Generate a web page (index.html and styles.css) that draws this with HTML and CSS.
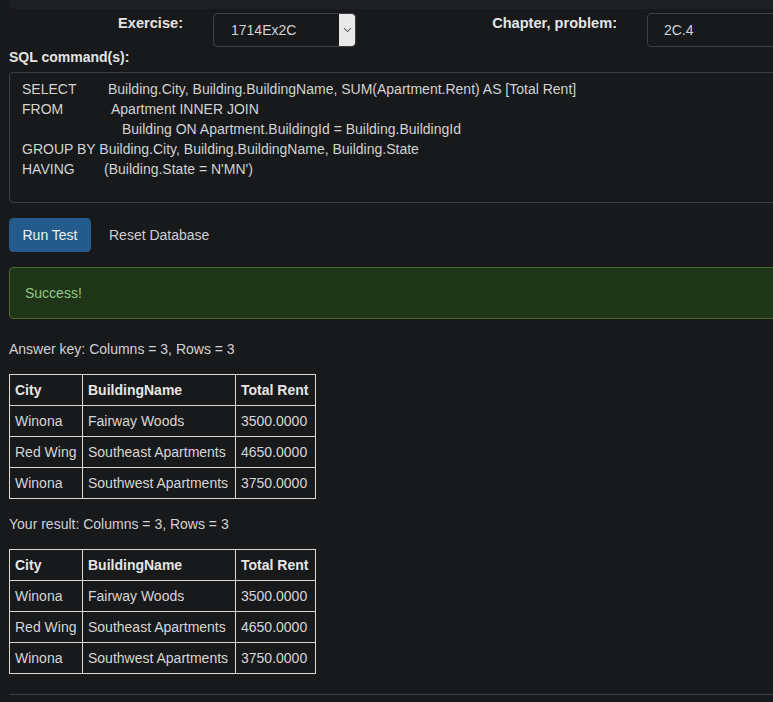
FILE: index.html
```html
<!DOCTYPE html>
<html>
<head>
<meta charset="utf-8">
<link rel="stylesheet" href="styles.css">
</head>
<body>
<div class="page">
  <div class="topbar"></div>
  <div class="form-row">
    <label class="lbl lbl-ex">Exercise:</label>
    <div class="select">
      <span class="select-text">1714Ex2C</span>
      <span class="caret-box"><svg width="9" height="6" viewBox="0 0 9 6"><path d="M1 1.2 L4.5 4.6 L8 1.2" fill="none" stroke="#666" stroke-width="1.1"/></svg></span>
    </div>
    <label class="lbl lbl-ch">Chapter, problem:</label>
    <div class="input">2C.4</div>
  </div>
  <label class="sql-label">SQL command(s):</label>
  <div class="sql-box">
    <div class="sql-line"><span class="kw kw-select">SELECT</span>Building.City, Building.BuildingName, SUM(Apartment.Rent) AS [Total Rent]</div>
    <div class="sql-line"><span class="kw kw-from">FROM</span>Apartment INNER JOIN</div>
    <div class="sql-line"><span class="kw kw-indent"></span>Building ON Apartment.BuildingId = Building.BuildingId</div>
    <div class="sql-line">GROUP BY Building.City, Building.BuildingName, Building.State</div>
    <div class="sql-line"><span class="kw kw-having">HAVING</span>(Building.State = N'MN')</div>
  </div>
  <div class="actions">
    <button class="btn btn-run">Run Test</button>
    <button class="btn btn-link">Reset Database</button>
  </div>
  <div class="alert">Success!</div>
  <p class="caption">Answer key: Columns = 3, Rows = 3</p>
  <table class="result">
    <colgroup><col class="c-city"><col class="c-name"><col class="c-rent"></colgroup>
    <tr><th>City</th><th>BuildingName</th><th>Total Rent</th></tr>
    <tr><td>Winona</td><td>Fairway Woods</td><td>3500.0000</td></tr>
    <tr><td>Red Wing</td><td>Southeast Apartments</td><td>4650.0000</td></tr>
    <tr><td>Winona</td><td>Southwest Apartments</td><td>3750.0000</td></tr>
  </table>
  <p class="caption">Your result: Columns = 3, Rows = 3</p>
  <table class="result">
    <colgroup><col class="c-city"><col class="c-name"><col class="c-rent"></colgroup>
    <tr><th>City</th><th>BuildingName</th><th>Total Rent</th></tr>
    <tr><td>Winona</td><td>Fairway Woods</td><td>3500.0000</td></tr>
    <tr><td>Red Wing</td><td>Southeast Apartments</td><td>4650.0000</td></tr>
    <tr><td>Winona</td><td>Southwest Apartments</td><td>3750.0000</td></tr>
  </table>
  <hr class="rule">
</div>
</body>
</html>
```
FILE: styles.css
```css
html, body {
  margin: 0;
  padding: 0;
  background: #18191b;
  overflow: hidden;
}
body {
  font-family: "Liberation Sans", Arial, sans-serif;
  font-size: 14px;
  line-height: 20px;
  color: #d2d2d2;
}
.page {
  width: 1100px;
  padding-left: 9px;
}
.topbar {
  height: 9px;
  background: #1f2023;
  border-bottom-left-radius: 5px;
}
.form-row {
  display: flex;
  align-items: flex-start;
  margin-top: 4px;
}
.lbl {
  font-weight: bold;
  font-size: 14.6px;
  line-height: 20px;
  color: #e4e4e4;
  text-align: right;
  margin-right: 30px;
}
.lbl-ex { width: 174px; }
.lbl-ch { width: 261px; }
.select {
  width: 143px;
  height: 34px;
  box-sizing: border-box;
  border: 1px solid #3e3f42;
  border-radius: 4px;
  display: flex;
  align-items: stretch;
  overflow: hidden;
}
.select-text {
  flex: 1;
  padding-left: 17px;
  line-height: 32px;
  color: #cfd3d8;
}
.caret-box {
  width: 16px;
  background: #e9e9e9;
  display: flex;
  align-items: center;
  justify-content: center;
  border-radius: 0 3px 3px 0;
}
.input {
  width: 260px;
  height: 34px;
  box-sizing: border-box;
  border: 1px solid #3e3f42;
  border-radius: 4px;
  padding-left: 16px;
  line-height: 32px;
  color: #cfd3d8;
}
.sql-label {
  display: block;
  font-weight: bold;
  color: #e4e4e4;
  margin-bottom: 5px;
}
.sql-box {
  height: 131px;
  box-sizing: border-box;
  border: 1px solid #3e3f42;
  border-radius: 4px;
  padding: 6px 12px 8px;
  color: #d2d2d2;
}
.sql-line {
  white-space: pre;
  height: 20px;
}
.kw {
  display: inline-block;
}
.kw-select { width: 86px; }
.kw-from { width: 89px; }
.kw-having { width: 82px; }
.kw-indent { width: 100px; }
.actions {
  display: flex;
  gap: 5px;
  margin-top: 15px;
}
.btn {
  font-family: inherit;
  font-size: 14px;
  line-height: 20px;
  padding: 6px 12px;
  border: 1px solid transparent;
  border-radius: 4px;
  background: none;
  cursor: pointer;
}
.btn-run {
  background: #255b8c;
  border-color: #245887;
  color: #eef2f6;
  width: 82px;
}
.btn-link {
  color: #d0d0d0;
}
.alert {
  margin-top: 15px;
  margin-bottom: 20px;
  padding: 15px;
  border: 1px solid #496a2a;
  border-radius: 4px;
  background: #1f3517;
  color: #93c98a;
}
.caption {
  margin: 0 0 15px;
  color: #d2d2d2;
}
.result {
  border-collapse: collapse;
  table-layout: fixed;
  width: 306px;
  margin-bottom: 15px;
  color: #d6d6d6;
}
.c-city { width: 73px; }
.c-name { width: 153px; }
.c-rent { width: 80px; }
.result th, .result td {
  border: 1px solid #dcd9d0;
  padding: 5px;
  text-align: left;
  white-space: nowrap;
}
.result th {
  font-weight: bold;
  color: #e6e6e6;
}
.rule {
  margin: 20px 0 0;
  border: 0;
  border-top: 1px solid #3d3e40;
}
```
